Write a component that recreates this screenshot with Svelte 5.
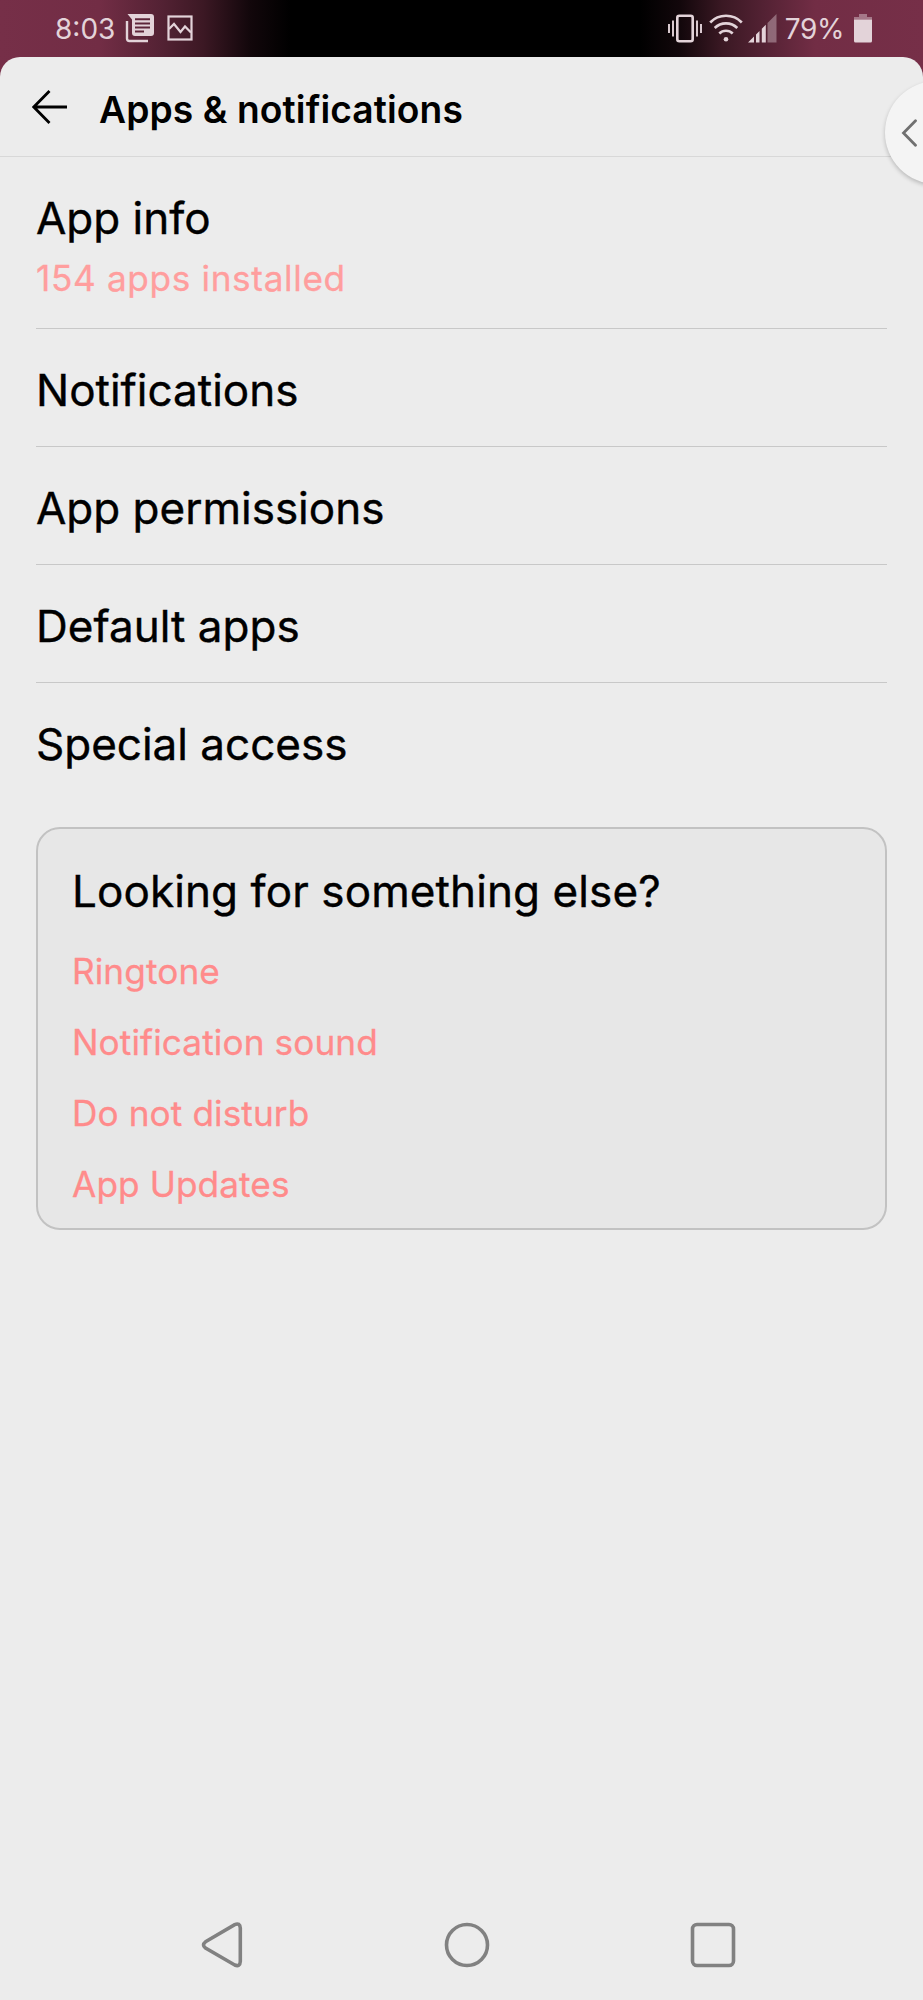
<script>
  const items = [
    { title: 'App info', summary: '154 apps installed' },
    { title: 'Notifications' },
    { title: 'App permissions' },
    { title: 'Default apps' },
    { title: 'Special access' }
  ];

  const suggestions = ['Ringtone', 'Notification sound', 'Do not disturb', 'App Updates'];
</script>

<div class="screen">
  <div class="status-bar">
    <div class="status-left">
      <span class="clock">8:03</span>
      <svg class="icon-news" width="30" height="30" viewBox="0 0 30 30" aria-hidden="true">
        <path d="M2 8v17.5a2.500 2.500 0 0 0 2.500 2.500H23" fill="none" stroke="currentColor" stroke-width="2.400" />
        <path fill="currentColor" fill-rule="evenodd" d="M2.500 1H26a3 3 0 0 1 3 3v16a3 3 0 0 1-3 3H10a3 3 0 0 1-3-3V6.500ZM10 5.200v2h15v-2ZM10 9.400v2h15v-2ZM10 13.600v2h15v-2ZM10 17.600v2h9v-2Z" />
      </svg>
      <svg class="icon-image" width="26" height="26" viewBox="0 0 26 26" fill="none" stroke="currentColor" stroke-width="2.200" aria-hidden="true">
        <rect x="1.500" y="1.500" width="23" height="23" />
        <path d="M2 14 7 9l6.500 8 4.500-5.500 6 6" />
      </svg>
    </div>
    <div class="status-right">
      <svg class="icon-vibrate" width="34" height="29" viewBox="0 0 34 29" fill="none" stroke="currentColor" aria-hidden="true">
        <rect x="9.300" y="1.800" width="15.400" height="25.400" rx="2" stroke-width="2.600" />
        <path d="M1 10v9M5 6.500v16M29 6.500v16M33 10v9" stroke-width="1.900" />
      </svg>
      <svg class="icon-wifi" width="34" height="30" viewBox="0 0 34 30" fill="none" stroke="currentColor" stroke-width="2.600" aria-hidden="true">
        <path d="M1.200 9.500a22 22 0 0 1 31.600 0M5.700 15a16 16 0 0 1 22.600 0M10.300 20.500a9.500 9.500 0 0 1 13.400 0" />
        <circle cx="17" cy="26.300" r="2.300" fill="currentColor" stroke="none" />
      </svg>
      <svg class="icon-signal" width="29" height="29" viewBox="0 0 29 29" fill="currentColor" aria-hidden="true">
        <path d="M0 28.500 6 22.500v6ZM8 20.500l3.500-3.500v11.500H8ZM13.800 14.700 17.800 10.700v17.800h-4Z" />
        <path d="M19.500 9 28.500 0v28.500h-9Z" opacity="0.400" />
      </svg>
      <span class="battery-level">79%</span>
      <svg width="18" height="29" viewBox="0 0 18 29" fill="currentColor" aria-hidden="true">
        <path d="M5 0h8v3h5v2.500H0V3h5Z" opacity="0.450" />
        <path d="M0 5.500h18V27a1.500 1.500 0 0 1-1.500 1.500h-15A1.500 1.500 0 0 1 0 27Z" />
      </svg>
    </div>
  </div>

  <main class="sheet">
    <header class="header">
      <button class="back" aria-label="Back">
        <svg width="35" height="34" viewBox="0 0 35 34" fill="none" stroke="currentColor" stroke-width="2.800" aria-hidden="true">
          <path d="M17.500 1 1.800 17l15.700 16M2 17h33" />
        </svg>
      </button>
      <h1>Apps &amp; notifications</h1>
    </header>

    <ul class="settings">
      {#each items as item}
        <li class="setting">
          <p class="setting-title">{item.title}</p>
          {#if item.summary}
            <p class="setting-summary">{item.summary}</p>
          {/if}
        </li>
      {/each}
    </ul>

    <section class="card">
      <h2>Looking for something else?</h2>
      {#each suggestions as suggestion}
        <a href="#top" class="suggestion">{suggestion}</a>
      {/each}
    </section>
  </main>

  <nav class="nav-bar">
    <svg width="50" height="50" viewBox="0 0 50 50" aria-hidden="true">
      <path d="M5.500 21.800 34.700 4.600Q40 2.500 40.300 8V41.500Q40 47.200 34.700 45L5.500 28Q1.500 24.900 5.500 21.800Z" />
    </svg>
    <svg width="50" height="50" viewBox="0 0 50 50" aria-hidden="true">
      <circle cx="25" cy="25" r="20.500" />
    </svg>
    <svg width="50" height="50" viewBox="0 0 50 50" aria-hidden="true">
      <rect x="4.500" y="4.500" width="41" height="41" rx="4.500" />
    </svg>
  </nav>

  <button class="edge-handle" aria-label="Open edge panel">
    <svg width="17" height="28" viewBox="0 0 17 28" fill="none" stroke="currentColor" stroke-width="2.800" stroke-linecap="round" aria-hidden="true">
      <path d="M14.500 1.800 2.500 14l12 12.200" />
    </svg>
  </button>
</div>

<style>
  :global(body) { margin: 0; background: #ececec; }
  h1, h2, p, ul { margin: 0; padding: 0; font-weight: 400; }
  button { border: 0; padding: 0; background: none; color: inherit; }
  svg { display: block; flex-shrink: 0; }
  .screen {
    position: relative;
    display: flex;
    flex-direction: column;
    height: 2000px;
    overflow: hidden;
    background: linear-gradient(90deg, #762f48 0, #722d45 100px, #542234 160px, #3c1824 203px, #12070b 250px, #000 290px, #000 640px, #12070b 680px, #3a1823 722px, #542234 765px, #722d45 815px, #762f48 100%) top / 100% 90px no-repeat;
    font-family: Inter, 'Liberation Sans', sans-serif;
    color: #000;
  }
  .status-bar {
    display: flex;
    justify-content: space-between;
    height: 57px;
    box-sizing: border-box;
    padding: 1px 51px 0 55px;
    color: #e3d3d9;
    font-size: 28px;
    line-height: 56px;
  }
  .status-left, .status-right { display: flex; align-items: center; }
  .icon-news { margin-left: 10px; margin-top: -3px; }
  .icon-image { margin-left: 12px; margin-top: -2px; }
  .status-right svg { margin-top: -2px; }
  .icon-wifi { margin-left: 7px; }
  .icon-signal { margin-left: 5px; }
  .battery-level { margin-left: 8px; margin-right: 10px; letter-spacing: -0.4px; }
  .sheet {
    flex: 1;
    border-radius: 20px 20px 0 0;
    background: #ececec;
  }
  .header {
    display: flex;
    align-items: center;
    height: 99px;
    padding-left: 32px;
    border-bottom: 1px solid #d8d8d8;
  }
  .back { margin-right: 32px; }
  h1 {
    margin-top: 6px;
    font-size: 37.2px;
    font-weight: 600;
    line-height: 50px;
    letter-spacing: 0.1px;
  }
  .settings { list-style: none; margin: 0 36px; }
  .setting { padding: 35px 0 30px; border-bottom: 1px solid #c8c8c8; }
  .setting:first-child { padding-bottom: 28px; }
  .setting:last-child { border-bottom: 0; padding-bottom: 57px; }
  .setting-title, h2 {
    font-size: 44px;
    line-height: 52px;
    -webkit-text-stroke: 0.4px currentColor;
  }
  .setting-summary {
    margin-top: 12px;
    font-size: 35.2px;
    line-height: 44px;
    letter-spacing: 0.65px;
    color: #ff9e9e;
    -webkit-text-stroke: 0.3px currentColor;
  }
  .card {
    margin: 0 36px;
    padding: 36px 34px 8px;
    border: 2px solid #c2c2c2;
    border-radius: 24px;
    background: #e7e7e7;
  }
  h2 { letter-spacing: 0.1px; }
  .suggestion {
    display: block;
    font-size: 35.2px;
    line-height: 71px;
    letter-spacing: 0.1px;
    color: #ff8b8b;
    text-decoration: none;
    -webkit-text-stroke: 0.3px currentColor;
  }
  h2 + .suggestion { margin-top: 19px; }
  .nav-bar {
    display: flex;
    padding: 0 0 30px 200px;
    background: #ececec;
  }
  .nav-bar svg { margin-right: 196px; fill: none; stroke: #818181; stroke-width: 3.6; }
  .nav-bar svg:first-child { margin-right: 192px; }
  .nav-bar svg:last-child { margin-right: 0; }
  /* round handle peeking in from the right side of the screen */
  .edge-handle {
    position: absolute;
    top: 81px;
    left: 885px;
    width: 103px;
    height: 103px;
    padding-left: 16px;
    border-radius: 50%;
    background: #f4f4f4;
    box-shadow: 0 2px 4px rgba(0, 0, 0, 0.22);
    color: #707070;
  }
</style>
